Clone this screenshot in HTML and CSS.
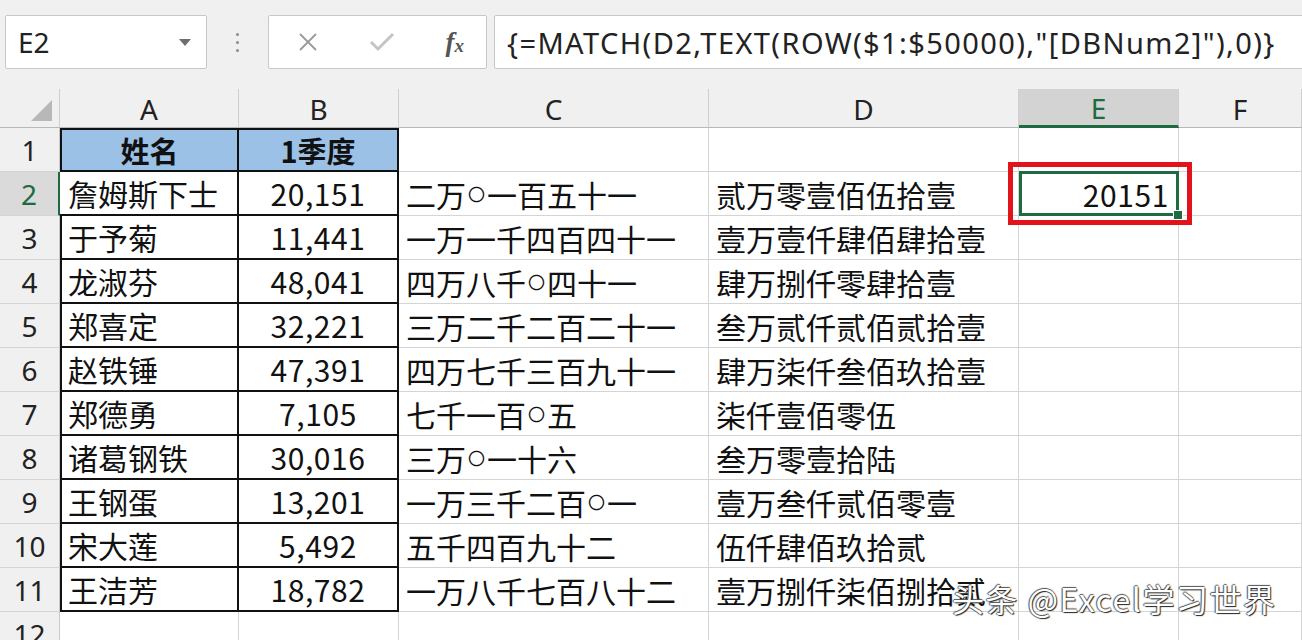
FILE: index.html
```html
<!DOCTYPE html>
<html lang="zh-CN">
<head>
<meta charset="utf-8">
<title>Excel</title>
<link rel="stylesheet" href="styles.css">
</head>
<body>
<div class="app">
  <div class="toolbar">
    <div class="namebox">
      <span class="name">E2</span>
      <span class="caret"></span>
    </div>
    <div class="dots"><i></i><i></i><i></i></div>
    <div class="btnbox">
      <svg class="ico-x" width="22" height="22" viewBox="0 0 22 22"><path d="M3 3 L19 19 M19 3 L3 19" stroke="#9a9a9a" stroke-width="1.8" fill="none"/></svg>
      <svg class="ico-ok" width="26" height="22" viewBox="0 0 26 22"><path d="M2 11 L9 18 L24 3" stroke="#c4c4c4" stroke-width="3" fill="none"/></svg>
      <span class="fx"><i>f</i><sub>x</sub></span>
    </div>
    <div class="formula">{=MATCH(D2,TEXT(ROW($1:$50000),"[DBNum2]"),0)}</div>
  </div>

  <div class="sheet">
    <div class="hd corner"><span class="tri"></span></div>
    <div class="hd col">A</div>
    <div class="hd col">B</div>
    <div class="hd col">C</div>
    <div class="hd col">D</div>
    <div class="hd col sel">E</div>
    <div class="hd col">F</div>

    <div class="rh">1</div>
    <div class="c ta th top">姓名</div>
    <div class="c tb th top">1季度</div>
    <div class="c"></div><div class="c"></div><div class="c"></div><div class="c"></div>

    <div class="rh active">2</div>
    <div class="c ta act">詹姆斯下士</div>
    <div class="c tb num">20,151</div>
    <div class="c">二万<span class="o">〇</span>一百五十一</div>
    <div class="c">贰万零壹佰伍拾壹</div>
    <div class="c cur"><span class="hl"></span><span class="sel-box"></span><span class="handle"></span><span class="val">20151</span></div>
    <div class="c"></div>

    <div class="rh">3</div>
    <div class="c ta">于予菊</div>
    <div class="c tb num">11,441</div>
    <div class="c">一万一千四百四十一</div>
    <div class="c">壹万壹仟肆佰肆拾壹</div>
    <div class="c"></div><div class="c"></div>

    <div class="rh">4</div>
    <div class="c ta">龙淑芬</div>
    <div class="c tb num">48,041</div>
    <div class="c">四万八千<span class="o">〇</span>四十一</div>
    <div class="c">肆万捌仟零肆拾壹</div>
    <div class="c"></div><div class="c"></div>

    <div class="rh">5</div>
    <div class="c ta">郑喜定</div>
    <div class="c tb num">32,221</div>
    <div class="c">三万二千二百二十一</div>
    <div class="c">叁万贰仟贰佰贰拾壹</div>
    <div class="c"></div><div class="c"></div>

    <div class="rh">6</div>
    <div class="c ta">赵铁锤</div>
    <div class="c tb num">47,391</div>
    <div class="c">四万七千三百九十一</div>
    <div class="c">肆万柒仟叁佰玖拾壹</div>
    <div class="c"></div><div class="c"></div>

    <div class="rh">7</div>
    <div class="c ta">郑德勇</div>
    <div class="c tb num">7,105</div>
    <div class="c">七千一百<span class="o">〇</span>五</div>
    <div class="c">柒仟壹佰零伍</div>
    <div class="c"></div><div class="c"></div>

    <div class="rh">8</div>
    <div class="c ta">诸葛钢铁</div>
    <div class="c tb num">30,016</div>
    <div class="c">三万<span class="o">〇</span>一十六</div>
    <div class="c">叁万零壹拾陆</div>
    <div class="c"></div><div class="c"></div>

    <div class="rh">9</div>
    <div class="c ta">王钢蛋</div>
    <div class="c tb num">13,201</div>
    <div class="c">一万三千二百<span class="o">〇</span>一</div>
    <div class="c">壹万叁仟贰佰零壹</div>
    <div class="c"></div><div class="c"></div>

    <div class="rh">10</div>
    <div class="c ta">宋大莲</div>
    <div class="c tb num">5,492</div>
    <div class="c">五千四百九十二</div>
    <div class="c">伍仟肆佰玖拾贰</div>
    <div class="c"></div><div class="c"></div>

    <div class="rh">11</div>
    <div class="c ta">王洁芳</div>
    <div class="c tb num">18,782</div>
    <div class="c">一万八千七百八十二</div>
    <div class="c">壹万捌仟柒佰捌拾贰</div>
    <div class="c"></div><div class="c"></div>

    <div class="rh">12</div>
    <div class="c"></div><div class="c"></div><div class="c"></div><div class="c"></div><div class="c"></div><div class="c"></div>
  </div>

  <div class="watermark">头条 @Excel学习世界</div>
</div>
</body>
</html>
```

FILE: styles.css
```css
html, body {
  margin: 0;
  padding: 0;
  background: #f0f0f0;
  overflow: hidden;
}
.app {
  position: relative;
  width: 1302px;
  height: 640px;
  overflow: hidden;
  font-family: "Noto Sans CJK SC", "Noto Sans", sans-serif;
  color: #111;
}

/* toolbar */
.toolbar {
  display: flex;
  align-items: center;
  height: 89px;
  padding: 0 0 5px 5px;
  box-sizing: border-box;
  background: #f0f0f0;
}
.namebox, .btnbox, .formula {
  height: 54px;
  background: #fff;
  border: 1px solid #c8c8c8;
  border-radius: 2px;
  box-sizing: border-box;
  display: flex;
  align-items: center;
}
.namebox {
  width: 202px;
  padding: 0 0 0 12px;
  justify-content: space-between;
}
.name {
  font-family: "Noto Sans", sans-serif;
  font-size: 28px;
  color: #222;
}
.caret {
  width: 0; height: 0;
  border-left: 6px solid transparent;
  border-right: 6px solid transparent;
  border-top: 7px solid #6e6e6e;
  margin-right: 15px;
}
.dots {
  width: 61px;
  display: flex;
  flex-direction: column;
  align-items: center;
  gap: 5px;
}
.dots i {
  display: block;
  width: 3px; height: 3px;
  border-radius: 50%;
  background: #8a8a8a;
}
.btnbox {
  width: 219px;
  padding: 0 22px 0 28px;
  justify-content: space-between;
}
.fx {
  font-family: "Liberation Serif", serif;
  font-size: 27px;
  color: #555;
  font-weight: bold;
}
.fx i { font-style: italic; }
.fx sub { font-size: 19px; font-style: italic; vertical-align: -1px; }
.formula {
  flex: 1;
  margin-left: 7px;
  margin-right: -10px;
  padding-left: 12px;
  font-family: "Noto Sans", sans-serif;
  font-size: 29px;
  color: #222;
  white-space: nowrap;
  letter-spacing: 1.4px;
}

/* sheet */
.sheet {
  display: grid;
  grid-template-columns: 60px 179px 160px 310px 310px 160px 123px;
  grid-template-rows: 39px repeat(12, 44px);
  background: #fff;
}
.hd {
  background: #f0f0f0;
  border-bottom: 1px solid #b8b8b8;
  border-right: 1px solid #cfcfcf;
  box-sizing: border-box;
  display: flex;
  align-items: center;
  justify-content: center;
  font-family: "Noto Sans", sans-serif;
  font-size: 28px;
  color: #222;
  padding-top: 2px;
}
.hd.corner {
  justify-content: flex-end;
  align-items: flex-end;
  padding: 0 7px 6px 0;
}
.tri {
  width: 0; height: 0;
  border-left: 21px solid transparent;
  border-bottom: 21px solid #b8b8b8;
}
.hd.sel {
  background: #d3d3d3;
  color: #1e6b41;
  border-bottom: 3px solid #1e6b41;
}
.rh {
  background: #f0f0f0;
  border-bottom: 1px solid #d4d4d4;
  border-right: 1px solid #c8c8c8;
  box-sizing: border-box;
  display: flex;
  align-items: center;
  justify-content: center;
  font-family: "Noto Sans", sans-serif;
  font-size: 28px;
  color: #222;
}
.rh.active {
  background: #dadada;
  color: #1e6b41;
  border-right: 2px solid #1e6b41;
}
.c {
  border-bottom: 1px solid #d4d4d4;
  border-right: 1px solid #d4d4d4;
  box-sizing: border-box;
  display: flex;
  align-items: center;
  padding-left: 7px;
  font-size: 30px;
  white-space: nowrap;
  color: #111;
}
.c .o {
  font-size: 17px;
  margin: 0 2px;
}
.c.ta {
  border-left: 2px solid #111;
  border-right: 2px solid #111;
  border-bottom: 2px solid #111;
  padding-left: 6px;
}
.c.ta.act { border-left: 0; padding-left: 8px; }
.c.tb {
  border-right: 2px solid #111;
  border-bottom: 2px solid #111;
}
.c.top { border-top: 2px solid #111; }
.c.th {
  background: #9bc2e6;
  justify-content: center;
  padding-left: 0;
  font-weight: bold;
  font-size: 29px;
}
.c.num {
  justify-content: center;
  padding-left: 0;
  letter-spacing: 0.6px;
}
.c.cur {
  position: relative;
  justify-content: flex-end;
  padding: 0 9px 0 0;
  overflow: visible;
  letter-spacing: 0.6px;
}
.hl {
  position: absolute;
  left: -11px;
  right: -14px;
  top: -10px;
  bottom: -10px;
  border: 5px solid #e3131b;
  box-sizing: border-box;
  z-index: 2;
}
.sel-box {
  position: absolute;
  left: 0; right: -1px; top: -1px; bottom: -1px;
  border: 3px solid #1e6b41;
  box-sizing: border-box;
  z-index: 3;
}
.handle {
  position: absolute;
  right: -5px;
  bottom: -5px;
  width: 8px; height: 8px;
  background: #1e6b41;
  border: 1px solid #fff;
  z-index: 4;
}
.val { position: relative; z-index: 5; }

.watermark {
  position: absolute;
  left: 952px;
  top: 582px;
  font-family: "Noto Sans CJK SC", sans-serif;
  font-size: 32px;
  letter-spacing: 1.5px;
  color: #fff;
  white-space: nowrap;
  text-shadow: 1px 1px 1px #222, -1px 0 1px #555, 0 -1px 1px #555;
  line-height: 1;
}
```
